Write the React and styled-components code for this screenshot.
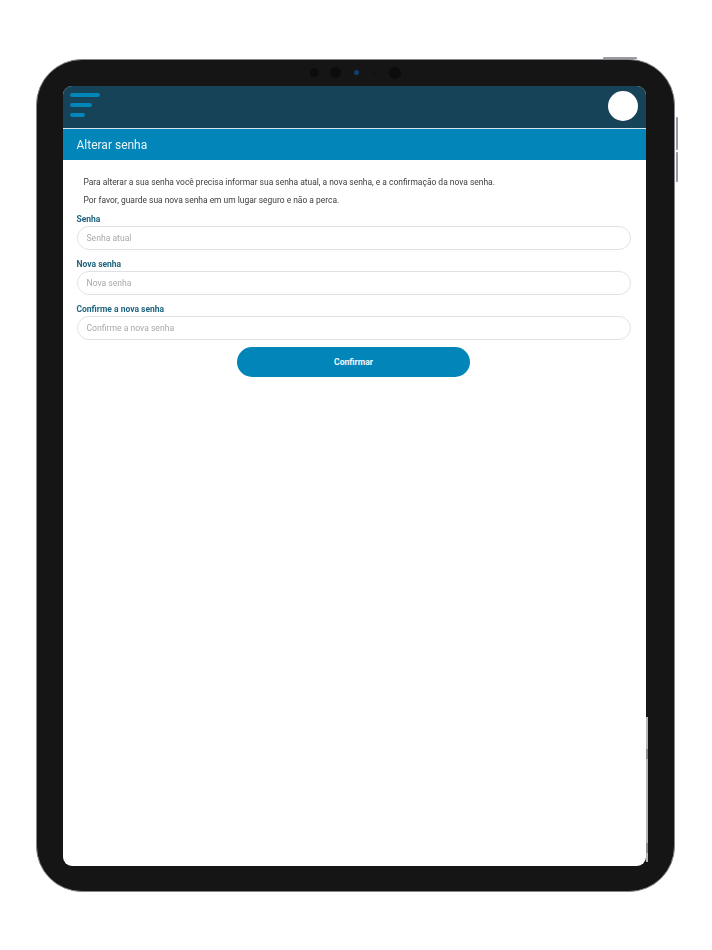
import React from 'react';
import styled, { createGlobalStyle } from 'styled-components';

const GlobalStyle = createGlobalStyle`
	html, body {
		margin: 0;
		padding: 0;
		background: #fff;
		font-family: Roboto, "Liberation Sans", sans-serif;
	}
`;

const Page = styled.div`
	width: 712px;
	height: 950px;
	box-sizing: border-box;
	padding: 59px 0 0 36px;
`;

const Device = styled.div`
	position: relative;
	width: 639px;
	height: 833px;
	box-sizing: border-box;
	display: flex;
	flex-direction: column;
	padding: 0 28.5px 25px 26px;
	background: #151515;
	border: 1.5px solid #85858c;
	border-radius: 46px;
`;

const TopButton = styled.span`
	position: absolute;
	top: -3.5px;
	right: 37px;
	width: 34px;
	height: 2px;
	background: #9a9aa0;
	border-radius: 1px 1px 0 0;
`;

const SideButton = styled.span`
	position: absolute;
	top: ${(p) => p.$top}px;
	right: -3.5px;
	width: 2px;
	height: ${(p) => p.$h}px;
	background: #9a9aa0;
	border-radius: 0 1px 1px 0;
`;

const ScreenEdge = styled.span`
	position: absolute;
	top: 657px;
	right: 26.5px;
	width: 2px;
	height: 145px;
	background: linear-gradient(
		#b5b5b5 0 32px,
		#8a8a8a 32px 42px,
		#b5b5b5 42px 126px,
		#8a8a8a 126px 136px,
		#b5b5b5 136px
	);
`;

const Bezel = styled.div`
	height: 26px;
	flex: none;
	display: flex;
	align-items: center;
	padding: 0 0 1px 246.5px;
	box-sizing: border-box;
`;

const Lens = styled.span`
	flex: none;
	width: ${(p) => p.$size}px;
	height: ${(p) => p.$size}px;
	margin-right: ${(p) => p.$gap}px;
	border-radius: 50%;
	background: ${(p) => p.$color || '#0c0c0c'};
`;

const Screen = styled.div`
	flex: 1;
	display: flex;
	flex-direction: column;
	overflow: hidden;
	background: #fff;
	border-radius: 9px;
	filter: blur(0.6px);
`;

const TopBar = styled.header`
	height: 43px;
	box-sizing: border-box;
	flex: none;
	display: flex;
	align-items: center;
	justify-content: space-between;
	padding: 0 8px 0 6.5px;
	background: #164357;
	border-bottom: 1.5px solid #d5e3ea;
`;

const MenuIcon = styled.div`
	display: flex;
	flex-direction: column;
	gap: 6px;
	margin-top: -4px;
`;

const MenuBar = styled.span`
	display: block;
	width: ${(p) => p.$w}px;
	height: 4px;
	border-radius: 2px;
	background: #0285b8;
`;

const Avatar = styled.div`
	width: 30px;
	height: 30px;
	margin-top: -2px;
	border-radius: 50%;
	background: #fff;
`;

const TitleBar = styled.div`
	height: 31px;
	flex: none;
	display: flex;
	align-items: center;
	padding-left: 13.5px;
	background: #0285b8;
	color: #e8f3f8;
	font-size: 12px;
`;

const Content = styled.main`
	display: flex;
	flex-direction: column;
	padding: 17px 15px 0 13.5px;
`;

const Intro = styled.p`
	margin: 0 0 8px 7px;
	height: 10px;
	line-height: 10px;
	font-size: 8.45px;
	color: #3c3c3c;
	white-space: nowrap;
	&:last-of-type {
		margin-bottom: 9px;
	}
`;

const Field = styled.label`
	display: flex;
	flex-direction: column;
	margin-bottom: 9px;
`;

const FieldLabel = styled.span`
	height: 10px;
	line-height: 10px;
	margin-bottom: 2px;
	font-size: 8.5px;
	font-weight: 700;
	color: #1f6480;
`;

const Input = styled.input`
	height: 24px;
	box-sizing: border-box;
	padding: 0 9px;
	border: 1px solid #dfe2e4;
	border-radius: 12px;
	background: #fff;
	outline: none;
	font-family: inherit;
	font-size: 8.6px;
	&::placeholder {
		color: #a8a8a8;
		opacity: 1;
	}
`;

const SubmitButton = styled.button`
	align-self: center;
	width: 233px;
	height: 30px;
	margin: -2px 0 0 0;
	border: none;
	border-radius: 15px;
	background: #0285b8;
	color: #f2f8fb;
	font-family: inherit;
	font-size: 8.6px;
	font-weight: 700;
`;

const fields = [
	{ label: 'Senha', placeholder: 'Senha atual' },
	{ label: 'Nova senha', placeholder: 'Nova senha' },
	{ label: 'Confirme a nova senha', placeholder: 'Confirme a nova senha' },
];

const App = () => {
	return (
		<Page>
			<GlobalStyle />
			<Device>
				<TopButton />
				<SideButton $top={57} $h={33} />
				<SideButton $top={92} $h={30} />
				<Bezel>
					<Lens $size={9} $gap={11} />
					<Lens $size={11} $gap={13} />
					<Lens $size={5} $gap={14} $color="#123f73" />
					<Lens $size={2} $gap={14} />
					<Lens $size={12} $gap={0} />
				</Bezel>
				<Screen>
					<TopBar>
						<MenuIcon>
							<MenuBar $w={30} />
							<MenuBar $w={22} />
							<MenuBar $w={15} />
						</MenuIcon>
						<Avatar />
					</TopBar>
					<TitleBar>Alterar senha</TitleBar>
					<Content>
						<Intro>Para alterar a sua senha você precisa informar sua senha atual, a nova senha, e a confirmação da nova senha.</Intro>
						<Intro>Por favor, guarde sua nova senha em um lugar seguro e não a perca.</Intro>
						{fields.map((f) => (
							<Field key={f.label}>
								<FieldLabel>{f.label}</FieldLabel>
								<Input placeholder={f.placeholder} />
							</Field>
						))}
						<SubmitButton>Confirmar</SubmitButton>
					</Content>
				</Screen>
				<ScreenEdge />
			</Device>
		</Page>
	);
};

export default App;
